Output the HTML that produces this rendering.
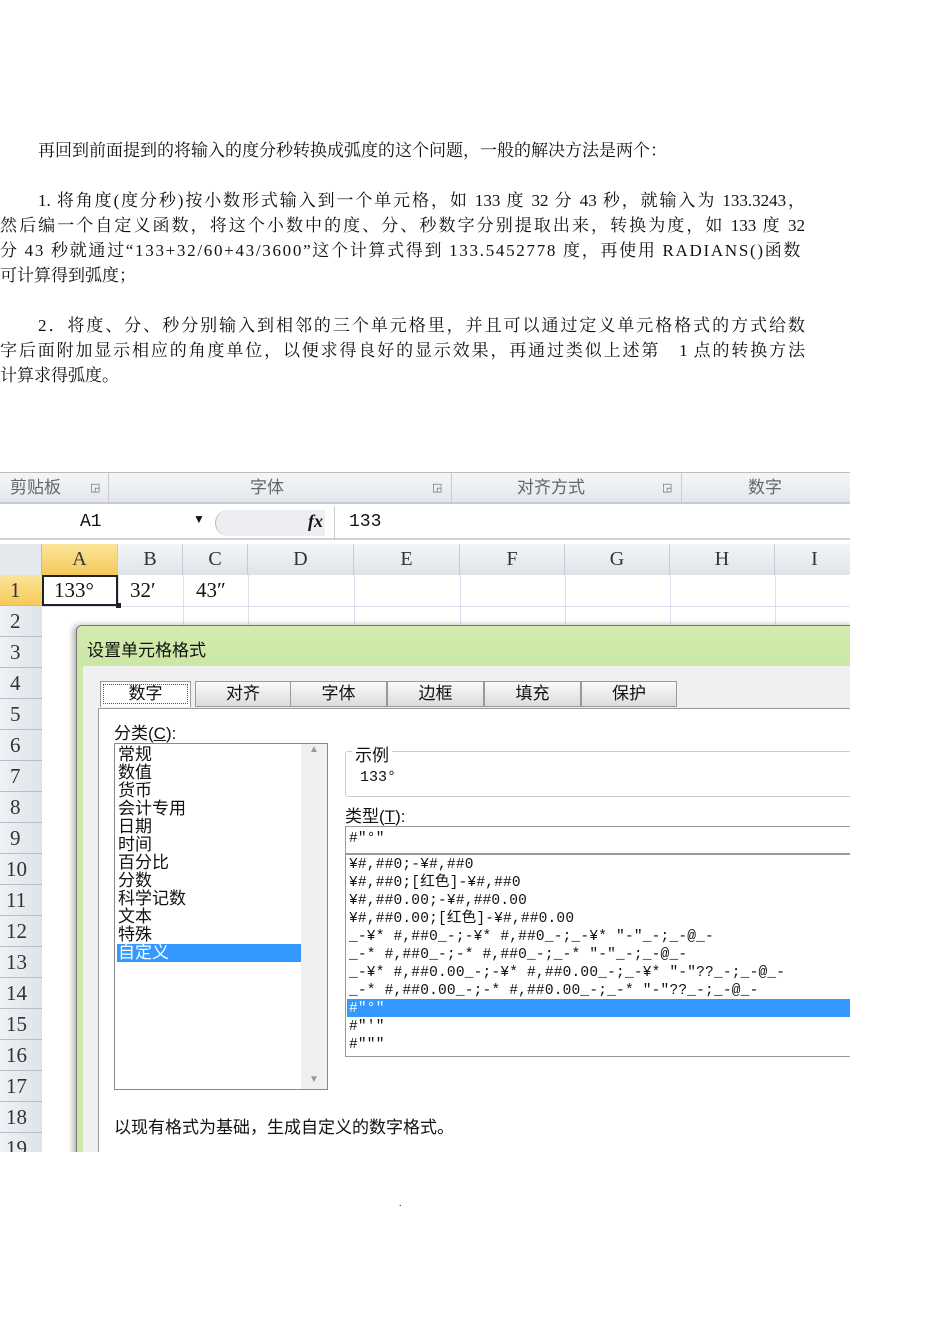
<!DOCTYPE html>
<html><head><meta charset="utf-8"><style>
*{margin:0;padding:0;box-sizing:border-box}
body{width:950px;height:1344px;background:#fff;position:relative;overflow:hidden;font-family:"Liberation Serif","Noto Serif CJK SC",serif;color:#111}
.l{position:absolute;font-size:17px;line-height:20px;white-space:nowrap}
.j{text-align:justify;text-align-last:justify;width:805px;left:0}
.a{position:absolute}
.s{font-family:"Liberation Sans","Noto Sans CJK SC",sans-serif}
.m{font-family:"Liberation Mono","Noto Sans CJK SC",monospace}
.ch{position:absolute;top:543px;height:31px;border-right:1px solid #c5cbd3;background:linear-gradient(#f3f5f8,#dfe3e8);text-align:center;font-size:20px;line-height:31px;color:#333;font-family:"Liberation Serif",serif}
.rh{position:absolute;left:0;width:42px;height:31px;border-bottom:1px solid #b8bec6;background:linear-gradient(90deg,#eef1f5,#dfe4ea);font-size:21px;line-height:31px;padding-left:10px;color:#333;font-family:"Liberation Serif",serif}
.tab{position:absolute;top:208px;height:26px;border:1px solid #999;background:linear-gradient(#fafafa,#dcdcdc);text-align:center;font-size:17px;line-height:24px}
.ci{position:absolute;left:118px;font-size:17px;line-height:18px}
.fl{position:absolute;left:349px;font-size:14.5px;line-height:18px;white-space:pre;font-family:"Liberation Mono","Noto Sans CJK SC",monospace;letter-spacing:.2px}
</style></head><body>
<div class="l" style="left:38px;top:141px">再回到前面提到的将输入的度分秒转换成弧度的这个问题，一般的解决方法是两个：</div>
<div class="l j" style="top:191px;padding-left:38px">1. 将角度(度分秒)按小数形式输入到一个单元格，如 133 度 32 分 43 秒，就输入为 133.3243，</div>
<div class="l j" style="top:216px">然后编一个自定义函数，将这个小数中的度、分、秒数字分别提取出来，转换为度，如 133 度 32</div>
<div class="l" style="left:0;top:241px;letter-spacing:1.7px">分 43 秒就通过“133+32/60+43/3600”这个计算式得到 133.5452778 度，再使用 RADIANS()函数</div>
<div class="l" style="left:0;top:266px">可计算得到弧度；</div>
<div class="l j" style="top:316px;padding-left:38px">2．将度、分、秒分别输入到相邻的三个单元格里，并且可以通过定义单元格格式的方式给数</div>
<div class="l j" style="top:341px">字后面附加显示相应的角度单位，以便求得良好的显示效果，再通过类似上述第　1 点的转换方法</div>
<div class="l" style="left:0;top:366px">计算求得弧度。</div>

<div class="a s" style="left:0;top:472px;width:850px;height:680px;background:#fff;overflow:hidden;border-top:1px solid #bbb">
 <div class="a" style="left:0;top:0;width:850px;height:31px;background:linear-gradient(#f4f6f9,#e3e7ec);border-bottom:2px solid #c7ccd3;color:#666;font-size:17px;line-height:30px">
  <span class="a" style="left:10px">剪贴板</span><span class="a" style="left:90px;font-size:11px">◲</span>
  <div class="a" style="left:108px;top:0;height:30px;border-left:1px solid #ccc"></div>
  <span class="a" style="left:250px">字体</span><span class="a" style="left:432px;font-size:11px">◲</span>
  <div class="a" style="left:451px;top:0;height:30px;border-left:1px solid #ccc"></div>
  <span class="a" style="left:517px">对齐方式</span><span class="a" style="left:662px;font-size:11px">◲</span>
  <div class="a" style="left:681px;top:0;height:30px;border-left:1px solid #ccc"></div>
  <span class="a" style="left:748px">数字</span>
 </div>
 <div class="a" style="left:0;top:33px;width:850px;height:34px;background:#fff;border-bottom:2px solid #cfd4da">
  <span class="a m" style="left:80px;top:6px;font-size:18px">A1</span>
  <span class="a" style="left:193px;top:6px;font-size:12px">▼</span>
  <div class="a" style="left:215px;top:4px;width:110px;height:26px;border-radius:13px 0 0 13px;background:#eceef1;border-left:1px solid #bbb"></div>
  <span class="a" style="left:308px;top:5px;font-style:italic;font-weight:bold;font-family:'Liberation Serif',serif;font-size:18px">fx</span>
  <div class="a" style="left:334px;top:0;height:34px;border-left:1px solid #ccc"></div>
  <span class="a m" style="left:349px;top:6px;font-size:18px">133</span>
 </div>
 <div class="a" style="left:0;top:71px;width:42px;height:31px;background:#e5e8ec;border-right:1px solid #bbb"></div>
 <div class="ch" style="left:42px;width:76px;top:71px;background:linear-gradient(#fbe59a,#f5c95a)">A</div>
 <div class="ch" style="left:118px;width:65px;top:71px">B</div>
 <div class="ch" style="left:183px;width:65px;top:71px">C</div>
 <div class="ch" style="left:248px;width:106px;top:71px">D</div>
 <div class="ch" style="left:354px;width:106px;top:71px">E</div>
 <div class="ch" style="left:460px;width:105px;top:71px">F</div>
 <div class="ch" style="left:565px;width:105px;top:71px">G</div>
 <div class="ch" style="left:670px;width:105px;top:71px">H</div>
 <div class="ch" style="left:775px;width:80px;top:71px">I</div>
 <div class="rh" style="top:102px;background:linear-gradient(#fbe59a,#f5c95a)">1</div>
 <div class="rh" style="top:133px">2</div><div class="rh" style="top:164px">3</div><div class="rh" style="top:195px">4</div>
 <div class="rh" style="top:226px">5</div><div class="rh" style="top:257px">6</div><div class="rh" style="top:288px">7</div>
 <div class="rh" style="top:319px">8</div><div class="rh" style="top:350px">9</div><div class="rh" style="top:381px;padding-left:6px">10</div>
 <div class="rh" style="top:412px;padding-left:6px">11</div><div class="rh" style="top:443px;padding-left:6px">12</div><div class="rh" style="top:474px;padding-left:6px">13</div>
 <div class="rh" style="top:505px;padding-left:6px">14</div><div class="rh" style="top:536px;padding-left:6px">15</div><div class="rh" style="top:567px;padding-left:6px">16</div>
 <div class="rh" style="top:598px;padding-left:6px">17</div><div class="rh" style="top:629px;padding-left:6px">18</div><div class="rh" style="top:660px;padding-left:6px">19</div>
 <div class="a" style="left:42px;top:133px;width:808px;border-top:1px solid #dde"></div>
 <div class="a" style="left:118px;top:102px;height:31px;border-left:1px solid #dde"></div>
 <div class="a" style="left:183px;top:102px;height:60px;border-left:1px solid #dde"></div>
 <div class="a" style="left:248px;top:102px;height:60px;border-left:1px solid #dde"></div>
 <div class="a" style="left:354px;top:102px;height:60px;border-left:1px solid #dde"></div>
 <div class="a" style="left:460px;top:102px;height:60px;border-left:1px solid #dde"></div>
 <div class="a" style="left:565px;top:102px;height:60px;border-left:1px solid #dde"></div>
 <div class="a" style="left:670px;top:102px;height:60px;border-left:1px solid #dde"></div>
 <div class="a" style="left:775px;top:102px;height:60px;border-left:1px solid #dde"></div>
 <div class="a" style="left:42px;top:102px;width:76px;height:31px;border:2px solid #222"></div>
 <div class="a" style="left:116px;top:130px;width:5px;height:5px;background:#222"></div>
 <span class="a" style="left:54px;top:105px;font-size:21px;font-family:'Liberation Serif',serif">133°</span>
 <span class="a" style="left:130px;top:105px;font-size:21px;font-family:'Liberation Serif',serif">32′</span>
 <span class="a" style="left:196px;top:105px;font-size:21px;font-family:'Liberation Serif',serif">43″</span>
 <div class="a" style="left:76px;top:152px;width:780px;height:540px;background:#f0f0f0;border:1px solid #777;border-radius:6px 0 0 0;box-shadow:-3px 0 6px rgba(0,0,0,.3)">
  <div class="a" style="left:0;top:0;width:780px;height:40px;background:linear-gradient(#d2ebb0,#cbe7a4);border-radius:6px 0 0 0"></div>
  <div class="a" style="left:0;top:40px;width:6px;height:500px;background:#cde8a8"></div>
  <span class="a" style="left:10px;top:10px;font-size:17px">设置单元格格式</span>
  <div class="a" style="left:21px;top:82px;width:760px;height:460px;background:#fff;border:1px solid #999"></div>
 </div>
 <div class="tab" style="left:100px;width:91px;background:#fff;border-bottom:none;outline:1px dotted #555;outline-offset:-4px">数字</div>
 <div class="tab" style="left:195px;width:96px">对齐</div>
 <div class="tab" style="left:290px;width:97px">字体</div>
 <div class="tab" style="left:387px;width:97px">边框</div>
 <div class="tab" style="left:484px;width:97px">填充</div>
 <div class="tab" style="left:581px;width:96px">保护</div>
 <span class="a" style="left:114px;top:246px;font-size:17px">分类(<u>C</u>):</span>
 <div class="a" style="left:114px;top:270px;width:214px;height:347px;border:1px solid #888;background:#fff">
  <div class="a" style="right:0;top:0;width:26px;height:345px;background:#f0f0f0;color:#999;font-size:10px;text-align:center">▲<div style="position:absolute;bottom:4px;width:26px">▼</div></div>
  <div class="a" style="left:2px;top:200px;width:184px;height:18px;background:#3399ff"></div>
 </div>
 <div class="ci" style="top:273px">常规</div><div class="ci" style="top:291px">数值</div><div class="ci" style="top:309px">货币</div>
 <div class="ci" style="top:327px">会计专用</div><div class="ci" style="top:345px">日期</div><div class="ci" style="top:363px">时间</div>
 <div class="ci" style="top:381px">百分比</div><div class="ci" style="top:399px">分数</div><div class="ci" style="top:417px">科学记数</div>
 <div class="ci" style="top:435px">文本</div><div class="ci" style="top:453px">特殊</div><div class="ci" style="top:471px;color:#fff">自定义</div>
 <div class="a" style="left:345px;top:278px;width:510px;height:46px;border:1px solid #ccc;border-radius:3px"></div>
 <span class="a" style="left:352px;top:268px;font-size:17px;background:#fff;padding:0 3px">示例</span>
 <span class="a m" style="left:360px;top:296px;font-size:15px">133°</span>
 <span class="a" style="left:345px;top:329px;font-size:17px">类型(<u>T</u>):</span>
 <div class="a" style="left:345px;top:353px;width:510px;height:28px;border:1px solid #999"></div>
 <span class="fl" style="top:357px">#″°″</span>
 <div class="a" style="left:345px;top:381px;width:510px;height:203px;border:1px solid #999"></div>
 <div class="a" style="left:347px;top:526px;width:508px;height:18px;background:#3399ff"></div>
 <div class="fl" style="top:383px">¥#,##0;-¥#,##0</div>
 <div class="fl" style="top:401px">¥#,##0;[红色]-¥#,##0</div>
 <div class="fl" style="top:419px">¥#,##0.00;-¥#,##0.00</div>
 <div class="fl" style="top:437px">¥#,##0.00;[红色]-¥#,##0.00</div>
 <div class="fl" style="top:455px">_-¥* #,##0_-;-¥* #,##0_-;_-¥* "-"_-;_-@_-</div>
 <div class="fl" style="top:473px">_-* #,##0_-;-* #,##0_-;_-* "-"_-;_-@_-</div>
 <div class="fl" style="top:491px">_-¥* #,##0.00_-;-¥* #,##0.00_-;_-¥* "-"??_-;_-@_-</div>
 <div class="fl" style="top:509px">_-* #,##0.00_-;-* #,##0.00_-;_-* "-"??_-;_-@_-</div>
 <div class="fl" style="top:527px;color:#fff">#″°″</div>
 <div class="fl" style="top:545px">#″′″</div>
 <div class="fl" style="top:563px">#″″″</div>
 <span class="a" style="left:114px;top:640px;font-size:17px">以现有格式为基础，生成自定义的数字格式。</span>
</div>
<div class="a" style="left:399px;top:1198px;font-size:10px">.</div>
</body></html>
